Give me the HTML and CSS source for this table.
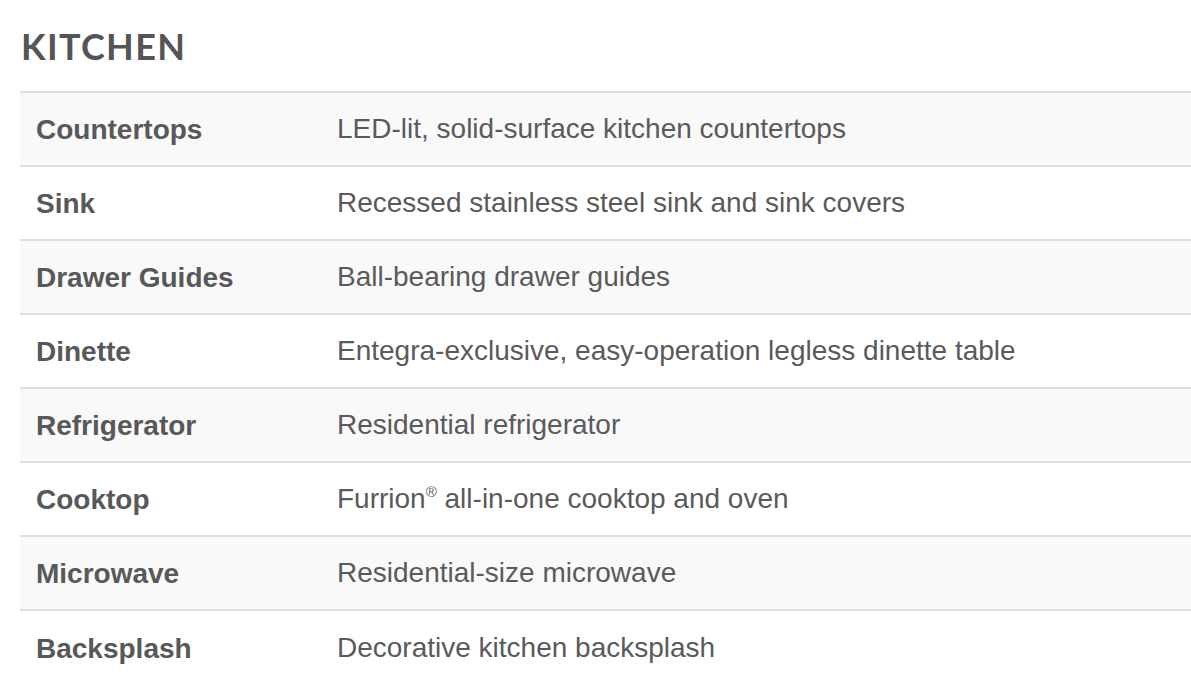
FILE: index.html
```html
<!DOCTYPE html>
<html>
<head>
<meta charset="utf-8">
<link rel="stylesheet" href="styles.css">
</head>
<body>
<section class="specs">
  <h2 class="title">KITCHEN</h2>
  <table class="table">
    <tbody>
      <tr class="alt"><th>Countertops</th><td>LED-lit, solid-surface kitchen countertops</td></tr>
      <tr><th>Sink</th><td>Recessed stainless steel sink and sink covers</td></tr>
      <tr class="alt"><th>Drawer Guides</th><td>Ball-bearing drawer guides</td></tr>
      <tr><th>Dinette</th><td>Entegra-exclusive, easy-operation legless dinette table</td></tr>
      <tr class="alt"><th>Refrigerator</th><td>Residential refrigerator</td></tr>
      <tr><th>Cooktop</th><td>Furrion<sup class="reg">®</sup> all-in-one cooktop and oven</td></tr>
      <tr class="alt"><th>Microwave</th><td>Residential-size microwave</td></tr>
      <tr><th>Backsplash</th><td>Decorative kitchen backsplash</td></tr>
    </tbody>
  </table>
</section>
</body>
</html>
```

FILE: styles.css
```css
html, body {
  margin: 0;
  padding: 0;
  background: #ffffff;
}
.specs {
  padding: 0 0 0 20px;
}
.title {
  margin: 0;
  padding: 24px 0 0 1px;
  height: 91px;
  box-sizing: border-box;
  font-family: Lato, "Open Sans", sans-serif;
  font-weight: 700;
  font-size: 36px;
  line-height: 44px;
  letter-spacing: 1.3px;
  color: #555557;
}
.table {
  width: 1200px;
  border-collapse: collapse;
  font-family: "Liberation Sans", Arial, sans-serif;
  font-size: 28px;
  color: #58585a;
}
.table tr {
  border-top: 2px solid #dedede;
  height: 74px;
}
.table tr.alt {
  background: #f9f9f9;
}
.table th {
  width: 285px;
  padding: 2px 0 0 16px;
  text-align: left;
  font-weight: 700;
  vertical-align: middle;
}
.table td {
  padding: 0 0 0 16px;
  font-weight: 400;
  vertical-align: middle;
  color: #5a5a5c;
}
.reg {
  font-size: 15px;
  vertical-align: 11px;
  line-height: 0;
}
```
